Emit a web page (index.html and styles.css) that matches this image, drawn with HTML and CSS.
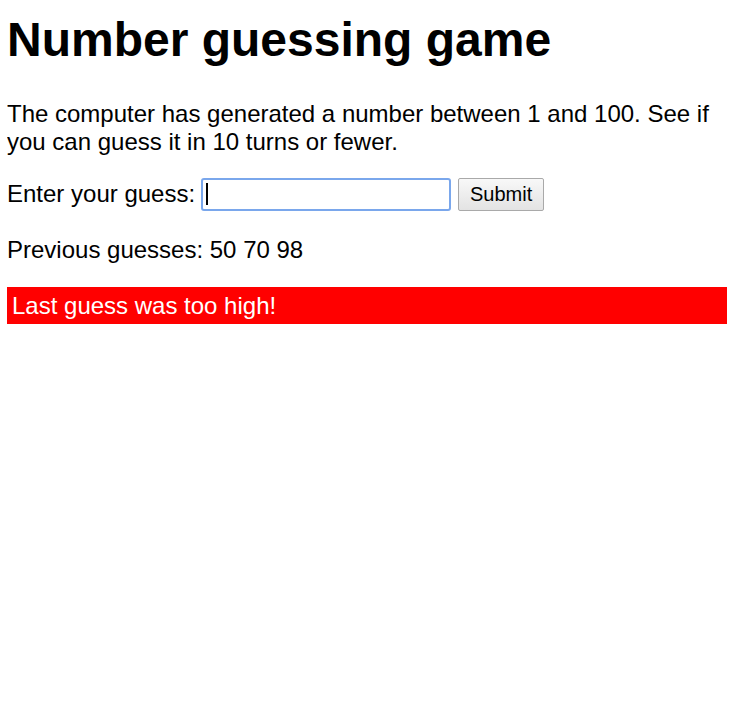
FILE: index.html
```html
<!DOCTYPE html>
<html lang="en">
<head>
<meta charset="utf-8">
<title>Number guessing game</title>
<link rel="stylesheet" href="styles.css">
</head>
<body>
<h1>Number guessing game</h1>
<p class="intro">The computer has generated a number between 1 and 100. See if you can guess it in 10 turns or fewer.</p>
<div class="form">
  <label for="guessField">Enter your guess: </label><input type="text" id="guessField" class="guessField" value=""><span class="caret"></span>
  <button class="guessSubmit" type="button">Submit</button>
</div>
<div class="resultParas">
  <p class="guesses">Previous guesses: 50 70 98</p>
  <p class="lastResult">Last guess was too high!</p>
</div>
</body>
</html>
```
FILE: styles.css
```css
html {
  font-family: "Liberation Sans", Arial, sans-serif;
}
body {
  margin: 7px 6px 7px 7px;
  font-size: 24px;
  color: #000;
  background: #fff;
}
h1 {
  font-size: 48px;
  margin: 5px 0 33px;
  line-height: 55px;
}
p {
  margin: 24px 0;
  line-height: 28px;
}
.intro {
  margin: 0 0 21px;
}
.form {
  display: flex;
  align-items: center;
  margin: 21px 0 24px;
  height: 34px;
}
.form label {
  line-height: 28px;
}
.guessField {
  box-sizing: border-box;
  width: 250px;
  height: 33px;
  margin: 0 0 0 6px;
  padding: 2px 4px;
  border: 2px solid #7aa7ec;
  border-radius: 3px;
  outline: none;
  font: inherit;
  font-size: 16px;
  background: #fff;
}
.caret {
  position: relative;
  left: -245px;
  width: 2px;
  height: 22px;
  background: #000;
  margin-right: -2px;
}
.guessSubmit {
  box-sizing: border-box;
  height: 33px;
  width: 86px;
  margin-left: 7px;
  padding: 0 6px;
  font-family: "Liberation Sans", Arial, sans-serif;
  font-size: 20px;
  color: #000;
  border: 1px solid #a9a9a9;
  border-radius: 2px;
  background: linear-gradient(#f8f8f8, #e3e3e3);
}
.guesses {
  margin: 25px 0 23px;
}
.lastResult {
  background: #ff0000;
  color: #fff;
  padding: 3px 5px;
  line-height: 31px;
  margin: 0;
}
```
